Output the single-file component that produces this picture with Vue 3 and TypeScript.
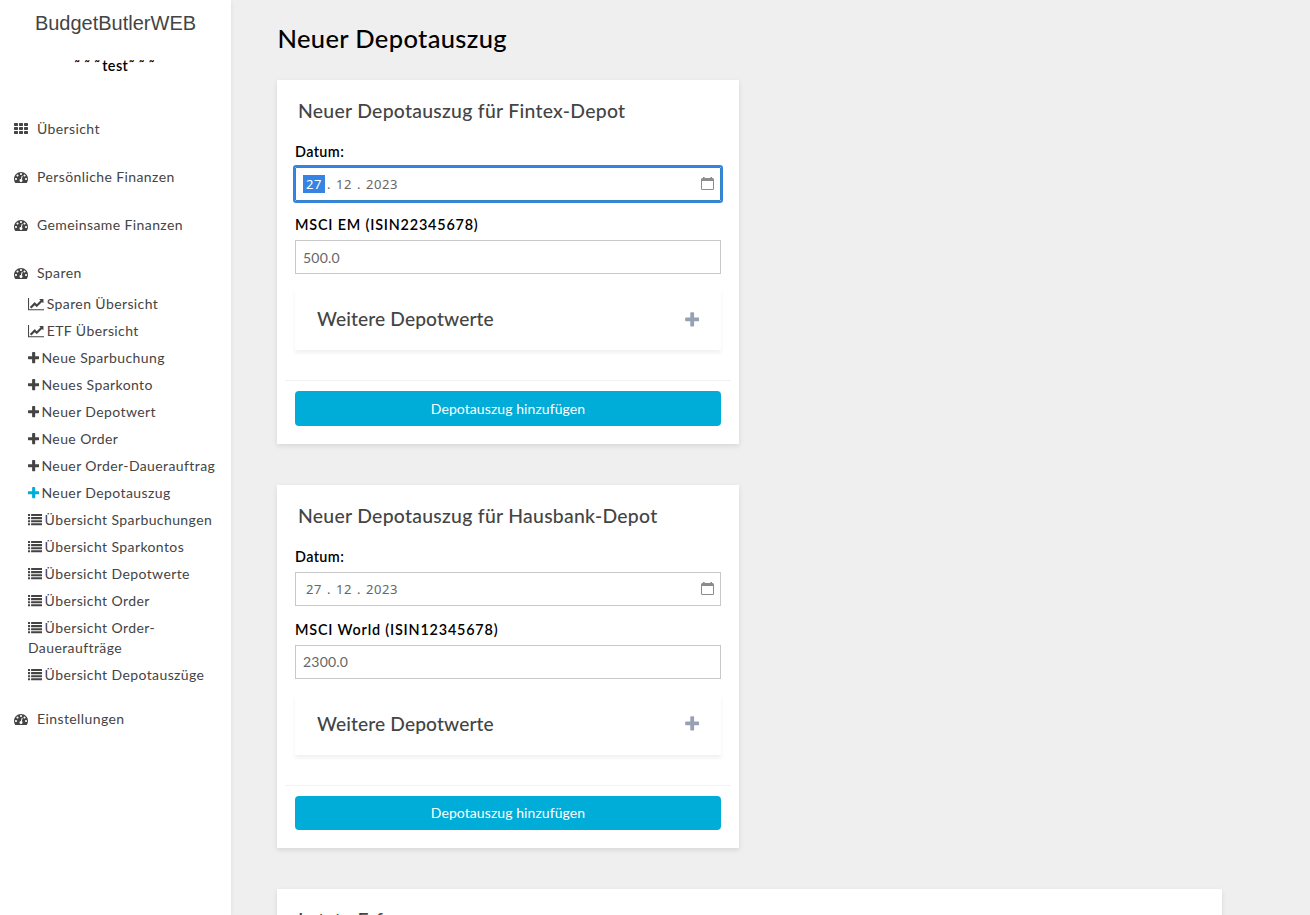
<script setup lang="ts">
import { h, type FunctionalComponent } from 'vue'

type IconName = 'th' | 'dashboard' | 'chart' | 'plus' | 'list'

interface Glyph {
  x: number
  width: number
  path: string
}

const dot = 'q0-53-37.5-90.5t-90.5-37.5-90.5 37.5-37.5 90.5 37.5 90.5 90.5 37.5 90.5-37.5 37.5-90.5z'
const cell = 'h320q40 0 68 28t28 68v192q0 40-28 68t-68 28h-320q-40 0-68-28t-28-68v-192q0-40 28-68t68-28z'
const row = (y: number) => `M32 ${y}h192q32 0 32 32v192q0 32-32 32h-192q-32 0-32-32v-192q0-32 32-32zM416 ${y}h1344q32 0 32 32v192q0 32-32 32h-1344q-32 0-32-32v-192q0-32 32-32z`

const glyphs: Record<IconName, Glyph> = {
  th: {
    x: 0,
    width: 1792,
    path: [128, 640, 1152].flatMap((y) => [96, 736, 1376].map((x) => `M${x} ${y}${cell}`)).join(''),
  },
  dashboard: {
    x: 0,
    width: 1792,
    path:
      `M384 1152${dot}m192-448${dot}m428 481l101-382q6-26-7.5-48.5t-38.5-29.5-48 6.5-30 39.5l-101 382q-60 5-107 43.5t-63 98.5q-20 77 20 146t117 89 146-20 89-117q16-60-6-117t-72-91z` +
      `m660-33${dot}m-640-640${dot}m448 192${dot}m320 448q0 261-141 483-19 29-54 29h-1402q-35 0-54-29-141-221-141-483 0-182 71-348t191-286 286-191 348-71 348 71 286 191 191 286 71 348z`,
  },
  chart: {
    x: 0,
    width: 2048,
    path: 'M2048 1536v128h-2048v-1536h128v1408h1920zm-128-1248v435q0 21-19.5 29.5t-35.5-7.5l-121-121-633 633q-10 10-23 10t-23-10l-233-233-416 416-192-192 585-585q10-10 23-10t23 10l233 233 464-464-121-121q-16-16-7.5-35.5t29.5-19.5h435q14 0 23 9t9 23z',
  },
  plus: {
    x: 192,
    width: 1408,
    path: 'M1600 736v192q0 40-28 68t-68 28h-416v416q0 40-28 68t-68 28h-192q-40 0-68-28t-28-68v-416h-416q-40 0-68-28t-28-68v-192q0-40 28-68t68-28h416v-416q0-40 28-68t68-28h192q40 0 68 28t28 68v416h416q40 0 68 28t28 68z',
  },
  list: { x: 0, width: 1792, path: [128, 512, 896, 1280].map(row).join('') },
}

const Icon: FunctionalComponent<{ name: IconName }> = (props) => {
  const g = glyphs[props.name]
  return h('svg', { viewBox: `${g.x} 0 ${g.width} 1792`, fill: 'currentColor', 'aria-hidden': 'true' }, [
    h('path', { d: g.path }),
  ])
}
Icon.props = ['name']

interface SubItem {
  icon: IconName
  label: string
  active?: boolean
}

interface MenuItem {
  icon: IconName
  label: string
  children?: SubItem[]
}

const menu: MenuItem[] = [
  { icon: 'th', label: 'Übersicht' },
  { icon: 'dashboard', label: 'Persönliche Finanzen' },
  { icon: 'dashboard', label: 'Gemeinsame Finanzen' },
  {
    icon: 'dashboard',
    label: 'Sparen',
    children: [
      { icon: 'chart', label: 'Sparen Übersicht' },
      { icon: 'chart', label: 'ETF Übersicht' },
      { icon: 'plus', label: 'Neue Sparbuchung' },
      { icon: 'plus', label: 'Neues Sparkonto' },
      { icon: 'plus', label: 'Neuer Depotwert' },
      { icon: 'plus', label: 'Neue Order' },
      { icon: 'plus', label: 'Neuer Order-Dauerauftrag' },
      { icon: 'plus', label: 'Neuer Depotauszug', active: true },
      { icon: 'list', label: 'Übersicht Sparbuchungen' },
      { icon: 'list', label: 'Übersicht Sparkontos' },
      { icon: 'list', label: 'Übersicht Depotwerte' },
      { icon: 'list', label: 'Übersicht Order' },
      { icon: 'list', label: 'Übersicht Order-Daueraufträge' },
      { icon: 'list', label: 'Übersicht Depotauszüge' },
    ],
  },
  { icon: 'dashboard', label: 'Einstellungen' },
]

const depots = [
  { name: 'Fintex-Depot', fund: 'MSCI EM (ISIN22345678)', value: '500.0', focused: true },
  { name: 'Hausbank-Depot', fund: 'MSCI World (ISIN12345678)', value: '2300.0', focused: false },
]
</script>

<template>
  <div class="layout">
    <aside class="sidebar">
      <div class="brand">BudgetButlerWEB</div>
      <div class="user"><span class="tilde">˜˜˜</span><span class="name">test</span><span class="tilde">˜˜˜</span></div>
      <nav>
        <div v-for="item in menu" :key="item.label" class="group">
          <a class="item"><Icon class="icon" :name="item.icon" /><span class="text">{{ item.label }}</span></a>
          <div v-if="item.children" class="children">
            <a v-for="sub in item.children" :key="sub.label" class="sub">
              <Icon :class="['subicon', sub.icon, { active: sub.active }]" :name="sub.icon" />{{ sub.label }}
            </a>
          </div>
        </div>
      </nav>
    </aside>

    <main class="main">
      <h1>Neuer Depotauszug</h1>
      <section v-for="depot in depots" :key="depot.name" class="card">
        <h2>Neuer Depotauszug für {{ depot.name }}</h2>
        <label class="label">Datum:</label>
        <div :class="['field', 'date', { focused: depot.focused }]">
          <span class="day">27</span><span class="dot">.</span><span>12</span><span class="dot">.</span><span class="year">2023</span>
          <svg class="calendar" viewBox="0 0 13 13" aria-hidden="true">
            <path fill-rule="evenodd" d="M2 0h1.600v1h5.800V0H11v1h.5Q13 1 13 2.500v9Q13 13 11.500 13h-10Q0 13 0 11.500v-9Q0 1 1.500 1H2zM1 4v7.500q0 .5.500.5h10q.5 0 .5-.5V4z" />
          </svg>
        </div>
        <label class="label second">{{ depot.fund }}</label>
        <div class="field">{{ depot.value }}</div>
        <div class="more">
          <span>Weitere Depotwerte</span>
          <Icon class="expand" name="plus" />
        </div>
        <hr />
        <button type="button">Depotauszug hinzufügen</button>
      </section>
      <section class="card wide">
        <h2>Letzte Erfassungen</h2>
      </section>
    </main>
  </div>
</template>

<style>
body {
  margin: 0;
  background: #efefef;
  overflow: hidden;
}
</style>

<style scoped>
.layout {
  display: flex;
  height: 915px;
  overflow: hidden;
  background: #efefef;
  color: #444;
  font-family: Lato, "Noto Sans", sans-serif;
  font-size: 14px;
  letter-spacing: 0.4px;
}
.sidebar {
  box-sizing: border-box;
  flex: none;
  width: 231px;
  height: 915px;
  background: #fff;
  box-shadow: 0 2px 5px rgba(0, 0, 0, 0.08);
}
.brand {
  height: 46px;
  line-height: 46px;
  text-align: center;
  font-family: "Liberation Sans", Arial, sans-serif;
  font-size: 20px;
  letter-spacing: 0;
}
.user {
  display: flex;
  justify-content: center;
  height: 40px;
  line-height: 40px;
  color: #000;
  font-size: 14.400px;
  font-weight: 600;
}
.tilde {
  width: 28px;
  letter-spacing: 4.300px;
}
.name {
  width: 26.500px;
}
nav {
  padding-top: 19px;
}
.item {
  display: flex;
  align-items: center;
  height: 48px;
  padding-left: 14px;
}
.icon {
  width: 14px;
  height: 14px;
  margin-right: 9px;
}
.text {
  line-height: 18px;
  margin-top: -1px;
}
.children {
  margin-top: -3px;
  padding-bottom: 3px;
}
.sub {
  display: block;
  padding: 0 8px 7px 28px;
  line-height: 20px;
}
.subicon {
  height: 14.4px;
  margin: 0 2.600px 0 -0.400px;
  vertical-align: -2px;
}
.subicon.chart { width: 16.500px; }
.subicon.plus { width: 11.300px; }
.subicon.list { width: 14.400px; }
.active { color: #00acd8; }
.main {
  flex: 1;
  padding-left: 46px;
}
h1 {
  height: 80.200px;
  margin: 0;
  line-height: 76px;
  color: #000;
  font-size: 25.500px;
  font-weight: 500;
  letter-spacing: 0.360px;
  text-indent: 0.500px;
}
.card {
  box-sizing: border-box;
  display: flex;
  flex-direction: column;
  width: 462px;
  height: 363.400px;
  margin-bottom: 41px;
  padding: 0 18px;
  background: #fff;
  box-shadow: 0 2px 5px rgba(0, 0, 0, 0.1);
}
.card.wide {
  width: 945px;
}
h2 {
  flex: none;
  height: 62px;
  margin: 0 0 0 3px;
  line-height: 61px;
  font-size: 19.400px;
  font-weight: 500;
  letter-spacing: 0.280px;
}
.label {
  flex: none;
  height: 25px;
  line-height: 20px;
  color: #000;
  font-size: 14.400px;
  font-weight: 600;
}
.label.second {
  margin-top: 14px;
  letter-spacing: 0.810px;
}
.field {
  box-sizing: border-box;
  display: flex;
  flex: none;
  align-items: center;
  height: 34px;
  padding: 0 7px;
  border: 1px solid #c8c8c8;
  color: #666;
  letter-spacing: 0.200px;
}
.date {
  font-family: "Noto Sans", sans-serif;
  font-size: 13px;
  letter-spacing: 0.6px;
}
.day {
  width: 22px;
  height: 18px;
  line-height: 19px;
  text-align: center;
}
.dot {
  width: 11px;
  padding-left: 2px;
  box-sizing: border-box;
}
.dot + span:not(.year) { width: 19px; }
.focused {
  border-color: #3584c4;
  border-radius: 1px;
  outline: 2px solid #3584e4;
}
.focused .day {
  background: #3584e4;
  color: #fff;
}
.calendar {
  width: 13px;
  height: 13px;
  margin: -1px -1px 0 auto;
  fill: #8c8c8c;
}
.more {
  box-sizing: border-box;
  display: flex;
  flex: none;
  align-items: center;
  justify-content: space-between;
  height: 61px;
  margin-top: 15px;
  padding: 0 22px;
  box-shadow: 0 3px 4px rgba(0, 0, 0, 0.06);
  font-size: 19.200px;
  font-weight: 500;
  letter-spacing: 0.120px;
}
.more span {
  margin-top: -2px;
}
.expand {
  width: 14.400px;
  height: 18px;
  color: #98a0b5;
}
hr {
  flex: none;
  width: auto;
  height: 1px;
  margin: 30px -10px 10px;
  border: 0;
  background: #f2f2f2;
}
button {
  flex: none;
  height: 34.400px;
  padding: 0;
  border: 0;
  border-radius: 4px;
  background: #00acd8;
  color: #fff;
  font: inherit;
  letter-spacing: 0.080px;
}
</style>
